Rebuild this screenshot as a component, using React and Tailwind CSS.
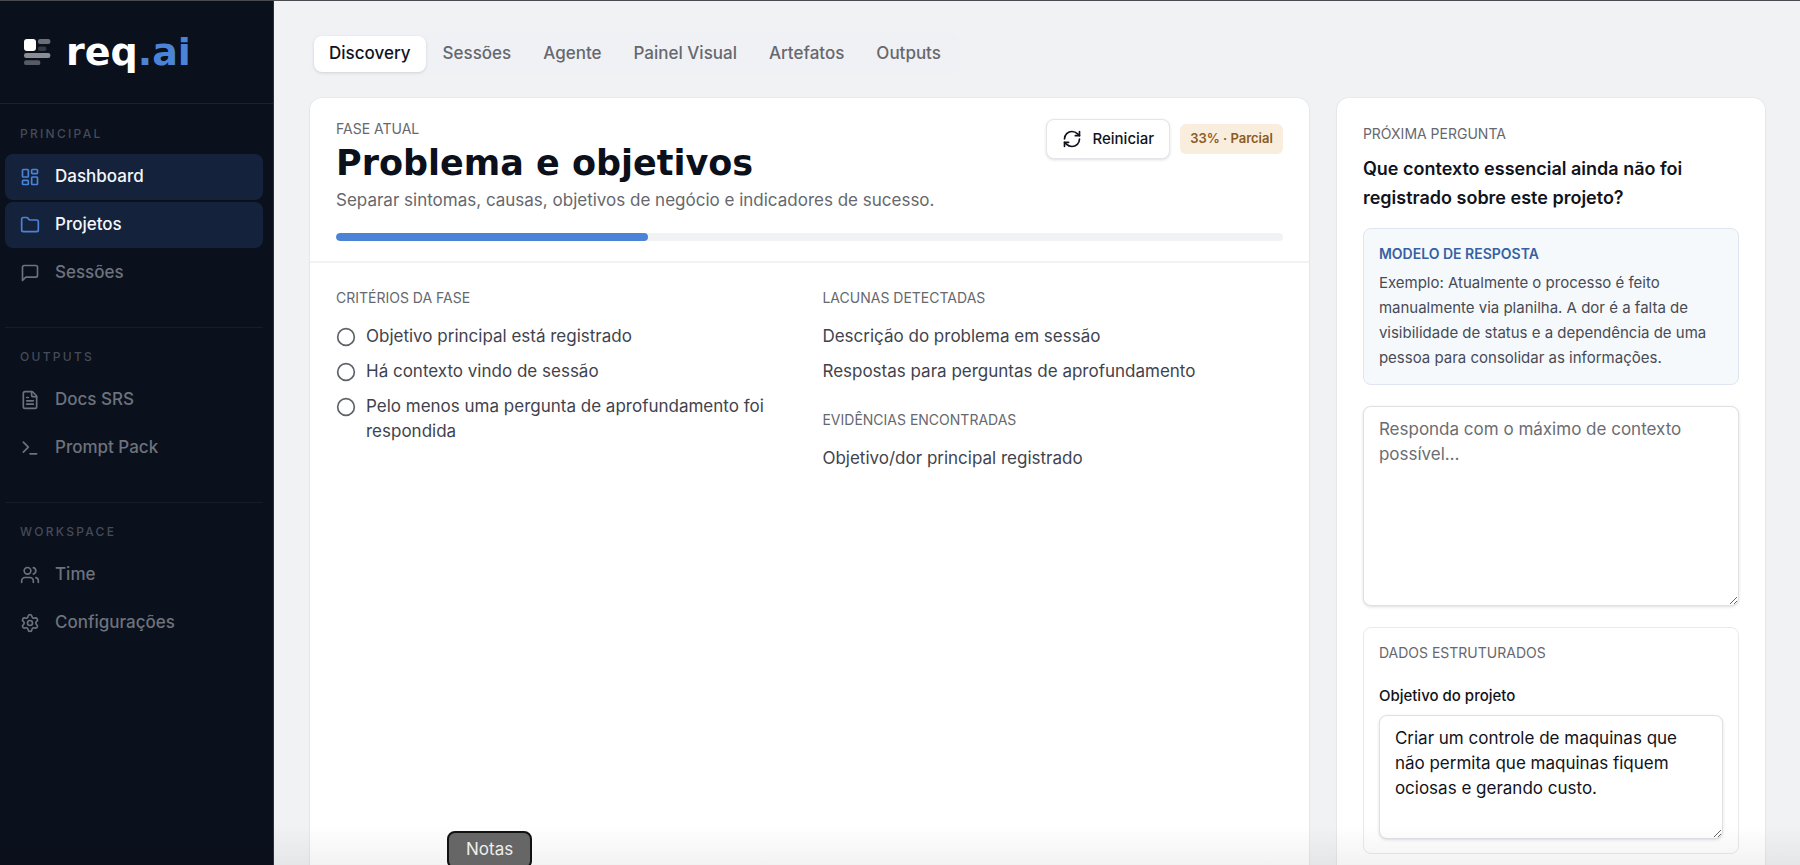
import React from "react";
import {
  LayoutDashboard,
  Folder,
  FileText,
  Terminal,
  Users,
  Settings,
  RefreshCw,
  Circle,
} from "lucide-react";

function MessageIcon({ className }) {
  return (
    <svg
      className={className}
      viewBox="0 0 24 24"
      fill="none"
      stroke="currentColor"
      strokeWidth="2"
      strokeLinecap="round"
      strokeLinejoin="round"
      aria-hidden="true"
    >
      <path d="M21 15a2 2 0 0 1-2 2H7l-4 4V5a2 2 0 0 1 2-2h14a2 2 0 0 1 2 2z" />
    </svg>
  );
}

function LogoMark() {
  return (
    <svg className="h-[27px] w-[27px] shrink-0" viewBox="0 0 27 27" aria-hidden="true">
      <rect x="0" y="0" width="12" height="12" rx="3" fill="#ffffff" />
      <rect x="14" y="0" width="12.4" height="5" rx="2" fill="#6a6e77" />
      <rect x="14" y="7.5" width="8.4" height="4.5" rx="2" fill="#353a45" />
      <rect x="0" y="14" width="26.4" height="5" rx="2.2" fill="#8a8d94" />
      <rect x="0" y="21.3" width="16.4" height="4.8" rx="2.2" fill="#575b65" />
    </svg>
  );
}

const sections = [
  {
    title: "Principal",
    items: [
      { label: "Dashboard", icon: LayoutDashboard, active: true },
      { label: "Projetos", icon: Folder, active: true },
      { label: "Sessões", icon: MessageIcon },
    ],
  },
  {
    title: "Outputs",
    items: [
      { label: "Docs SRS", icon: FileText },
      { label: "Prompt Pack", icon: Terminal },
    ],
  },
  {
    title: "Workspace",
    items: [
      { label: "Time", icon: Users },
      { label: "Configurações", icon: Settings },
    ],
  },
];

const tabs = ["Discovery", "Sessões", "Agente", "Painel Visual", "Artefatos", "Outputs"];

const criteria = [
  "Objetivo principal está registrado",
  "Há contexto vindo de sessão",
  "Pelo menos uma pergunta de aprofundamento foi respondida",
];

function Sidebar() {
  return (
    <aside className="flex w-[274px] shrink-0 flex-col border-r border-[#2a3140] bg-[#0a101c]">
      <div className="flex h-[103px] items-center gap-[15px] border-b border-[#1c2330] pl-6">
        <LogoMark />
        <span className="font-['DejaVu_Sans',sans-serif] text-[38px] leading-[44px] font-bold text-white">
          req<span className="text-[#4b84d6]">.ai</span>
        </span>
      </div>
      <nav className="flex flex-col pr-[10px] pl-[5px]">
        {sections.map((section) => (
          <section
            key={section.title}
            className="border-t border-[#161d29] pt-5 pb-[31px] first:border-transparent"
          >
            <h2 className="mb-[11px] pl-[15px] text-[12px] leading-[18px] font-medium tracking-[0.19em] text-[#454b57] uppercase">
              {section.title}
            </h2>
            <ul className="flex flex-col gap-[2px]">
              {section.items.map(({ label, icon: Icon, active }) => (
                <li key={label}>
                  <a
                    href="#"
                    className={
                      active
                        ? "flex h-[46px] items-center gap-[15px] rounded-lg bg-[#14233b] px-[15px] text-[17px] font-medium text-[#f4f6f9]"
                        : "flex h-[46px] items-center gap-[15px] rounded-lg px-[15px] text-[17px] font-medium text-[#6d727c]"
                    }
                  >
                    <Icon
                      strokeWidth={2}
                      className={active ? "h-5 w-5 shrink-0 text-[#4b84d6]" : "h-5 w-5 shrink-0"}
                    />
                    {label}
                  </a>
                </li>
              ))}
            </ul>
          </section>
        ))}
      </nav>
    </aside>
  );
}

function Eyebrow({ children }) {
  return (
    <h3 className="text-[14px] leading-5 font-normal text-[#66686e] uppercase">{children}</h3>
  );
}

function PhaseCard() {
  return (
    <section className="rounded-xl bg-white shadow-[0_0_0_1px_rgba(15,23,42,0.03),0_1px_3px_rgba(15,23,42,0.05)]">
      <header className="border-b-2 border-[#f1f2f4] px-[26px] pt-[21px] pb-5">
        <div className="flex items-start justify-between gap-4">
          <div>
            <Eyebrow>Fase atual</Eyebrow>
            <h1 className="mt-1 font-['DejaVu_Sans',sans-serif] text-[35px] leading-10 font-bold text-[#0b101b]">
              Problema e objetivos
            </h1>
            <p className="mt-[5px] text-[17px] leading-6 text-[#66686e]">
              Separar sintomas, causas, objetivos de negócio e indicadores de sucesso.
            </p>
          </div>
          <div className="flex items-center gap-[10px]">
            <button
              type="button"
              className="flex h-10 items-center gap-[10px] rounded-lg border border-[#e3e5e9] bg-white px-[15px] text-[15px] font-medium text-[#10131c] shadow-[0_1px_3px_rgba(15,23,42,0.14)]"
            >
              <RefreshCw strokeWidth={2} className="h-5 w-5" />
              Reiniciar
            </button>
            <span className="flex h-[30px] items-center rounded-md bg-[#f9edde] px-[10px] text-[13px] font-semibold text-[#8a5c22]">
              33% · Parcial
            </span>
          </div>
        </div>
        <div
          role="progressbar"
          aria-label="Progresso da fase"
          aria-valuenow={33}
          aria-valuemin={0}
          aria-valuemax={100}
          className="mt-[21px] h-2 overflow-hidden rounded-full bg-[#f1f2f4]"
        >
          <div className="h-full w-[33%] rounded-full bg-[#4b84d6]" />
        </div>
      </header>
      <div className="grid grid-cols-2 gap-[26px] px-[26px] py-[25px]">
        <div>
          <Eyebrow>Critérios da fase</Eyebrow>
          <ul className="mt-4 flex flex-col gap-[10px]">
            {criteria.map((text) => (
              <li key={text} className="flex gap-[10px] text-[17px] leading-[25px] text-[#3f434e]">
                <Circle strokeWidth={2} className="mt-[3px] h-5 w-5 shrink-0 text-[#5f6268]" />
                {text}
              </li>
            ))}
          </ul>
        </div>
        <div>
          <Eyebrow>Lacunas detectadas</Eyebrow>
          <ul className="mt-4 mb-[26px] flex flex-col gap-[10px] text-[17px] leading-[25px] text-[#3f434e]">
            <li>Descrição do problema em sessão</li>
            <li>Respostas para perguntas de aprofundamento</li>
          </ul>
          <Eyebrow>Evidências encontradas</Eyebrow>
          <ul className="mt-4 text-[17px] leading-[25px] text-[#3f434e]">
            <li>Objetivo/dor principal registrado</li>
          </ul>
        </div>
      </div>
    </section>
  );
}

function QuestionCard() {
  return (
    <section className="rounded-xl bg-white p-[26px] shadow-[0_0_0_1px_rgba(15,23,42,0.03),0_1px_3px_rgba(15,23,42,0.05)]">
      <Eyebrow>Próxima pergunta</Eyebrow>
      <h2
        id="question"
        className="mt-[10px] text-[18px] leading-[29px] font-semibold text-[#10131c]"
      >
        Que contexto essencial ainda não foi registrado sobre este projeto?
      </h2>
      <div className="mt-4 rounded-lg border border-[#dfe5f1] bg-[#f6f9fc] px-[15px] pt-[15px] pb-[14px]">
        <h3 className="text-[14px] leading-5 font-semibold text-[#3561a3] uppercase">
          Modelo de resposta
        </h3>
        <p className="mt-[6px] text-[15px] leading-[25px] text-[#474b55]">
          Exemplo: Atualmente o processo é feito manualmente via planilha. A dor é a falta de
          visibilidade de status e a dependência de uma pessoa para consolidar as informações.
        </p>
      </div>
      <textarea
        aria-labelledby="question"
        placeholder="Responda com o máximo de contexto possível…"
        className="mt-[21px] block h-[200px] w-full resize-y rounded-lg border border-[#dfe0e3] bg-white px-[15px] py-[10px] text-[17px] leading-[25px] text-[#10131c] shadow-[0_1px_3px_rgba(15,23,42,0.14)] placeholder:text-[#6b6d73]"
      />
      <div className="mt-[21px] rounded-lg border border-[#e8e9ec] px-[15px] pt-[15px] pb-[14px]">
        <Eyebrow>Dados estruturados</Eyebrow>
        <label
          htmlFor="goal"
          className="mt-[22px] block text-[15px] leading-[22px] font-medium text-[#10131c]"
        >
          Objetivo do projeto
        </label>
        <textarea
          id="goal"
          defaultValue="Criar um controle de maquinas que não permita que maquinas fiquem ociosas e gerando custo."
          className="mt-2 block h-[124px] w-full resize-y rounded-lg border border-[#dfe0e3] bg-white px-[15px] py-[10px] text-[17px] leading-[25px] text-[#10131c] shadow-[0_1px_3px_rgba(15,23,42,0.14)]"
        />
      </div>
    </section>
  );
}

export default function App() {
  return (
    <div className="relative flex h-screen overflow-hidden border-t border-[#4a4a50] bg-[#f1f2f4] font-['Inter',sans-serif]">
      <Sidebar />
      <main className="flex min-w-0 flex-1 flex-col gap-[22px] overflow-hidden pt-[31px] pr-[35px] pl-9">
        <div role="tablist" className="flex gap-[2px] self-start rounded-xl bg-[#f0f1f5] p-1">
          {tabs.map((tab, i) => (
            <button
              key={tab}
              type="button"
              role="tab"
              aria-selected={i === 0}
              className={
                i === 0
                  ? "h-9 rounded-lg bg-white px-[15px] text-[17px] font-medium text-[#10131c] shadow-[0_1px_3px_rgba(15,23,42,0.14)]"
                  : "h-9 rounded-lg px-[15px] text-[17px] font-medium text-[#66686e]"
              }
            >
              {tab}
            </button>
          ))}
        </div>
        <div className="grid min-h-[820px] shrink-0 grid-cols-[7fr_3fr] gap-7">
          <PhaseCard />
          <QuestionCard />
        </div>
      </main>
      <div className="pointer-events-none absolute inset-x-0 bottom-0 h-10 bg-linear-to-b from-transparent to-black/5" />
      <div
        role="tooltip"
        className="absolute -bottom-1 left-[447px] flex h-[38px] items-center rounded-lg border-2 border-[#111111] bg-[#666666] px-[17px] text-[17px] text-[#eeeeee]"
      >
        Notas
      </div>
    </div>
  );
}
